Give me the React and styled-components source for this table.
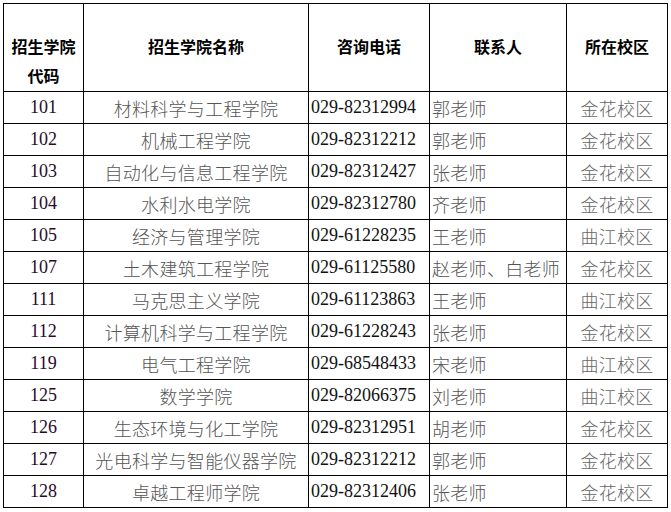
import { Fragment } from "react";
import styled, { createGlobalStyle } from "styled-components";

const GlobalStyle = createGlobalStyle`
  html, body {
    margin: 0;
    padding: 0;
    background: #ffffff;
  }
`;

const rows = [
  ["101", "材料科学与工程学院", "029-82312994", "郭老师", "金花校区"],
  ["102", "机械工程学院", "029-82312212", "郭老师", "金花校区"],
  ["103", "自动化与信息工程学院", "029-82312427", "张老师", "金花校区"],
  ["104", "水利水电学院", "029-82312780", "齐老师", "金花校区"],
  ["105", "经济与管理学院", "029-61228235", "王老师", "曲江校区"],
  ["107", "土木建筑工程学院", "029-61125580", "赵老师、白老师", "金花校区"],
  ["111", "马克思主义学院", "029-61123863", "王老师", "曲江校区"],
  ["112", "计算机科学与工程学院", "029-61228243", "张老师", "金花校区"],
  ["119", "电气工程学院", "029-68548433", "宋老师", "曲江校区"],
  ["125", "数学学院", "029-82066375", "刘老师", "曲江校区"],
  ["126", "生态环境与化工学院", "029-82312951", "胡老师", "金花校区"],
  ["127", "光电科学与智能仪器学院", "029-82312212", "郭老师", "金花校区"],
  ["128", "卓越工程师学院", "029-82312406", "张老师", "金花校区"],
];

const Page = styled.div`
  padding: 3px;
`;

const Grid = styled.div`
  display: grid;
  grid-template-columns: 80px 225px 121px 137px 101px;
  grid-template-rows: 88px repeat(${rows.length}, 32px);
  width: max-content;
  border-left: 1px solid #000;
  border-top: 1px solid #000;
`;

const HeadCell = styled.div`
  box-sizing: border-box;
  border-right: 1px solid #000;
  border-bottom: 1px solid #000;
  padding-top: 28px;
  display: flex;
  flex-direction: column;
  align-items: center;
  font-family: "Noto Sans CJK SC", sans-serif;
  font-weight: 700;
  font-size: 16px;
  line-height: 29px;
  color: #000;
`;

const Cell = styled.div`
  box-sizing: border-box;
  border-right: 1px solid #000;
  border-bottom: 1px solid #000;
  display: flex;
  align-items: center;
  justify-content: ${(p) => (p.$align === "left" ? "flex-start" : "center")};
  padding-left: ${(p) => (p.$align === "left" ? "2px" : "0")};
  font-family: "Liberation Serif", "Noto Sans CJK SC", serif;
  font-size: 18px;
  white-space: nowrap;
  color: ${(p) => p.$color || "#000"};
`;

const CnText = styled.span`
  font-weight: 300;
  letter-spacing: 0.3px;
`;

export default function App() {
  return (
    <Page>
      <GlobalStyle />
      <Grid>
        <HeadCell>
          <span>招生学院</span>
          <span>代码</span>
        </HeadCell>
        <HeadCell>招生学院名称</HeadCell>
        <HeadCell>咨询电话</HeadCell>
        <HeadCell>联系人</HeadCell>
        <HeadCell>所在校区</HeadCell>

        {rows.map(([code, name, phone, contact, campus]) => (
          <Fragment key={code}>
            <Cell $color="#2a0a2a">{code}</Cell>
            <Cell $color="#555">
              <CnText>{name}</CnText>
            </Cell>
            <Cell $align="left" $color="#111">
              {phone}
            </Cell>
            <Cell $align="left" $color="#555">
              <CnText>{contact}</CnText>
            </Cell>
            <Cell $color="#666">
              <CnText>{campus}</CnText>
            </Cell>
          </Fragment>
        ))}
      </Grid>
    </Page>
  );
}
